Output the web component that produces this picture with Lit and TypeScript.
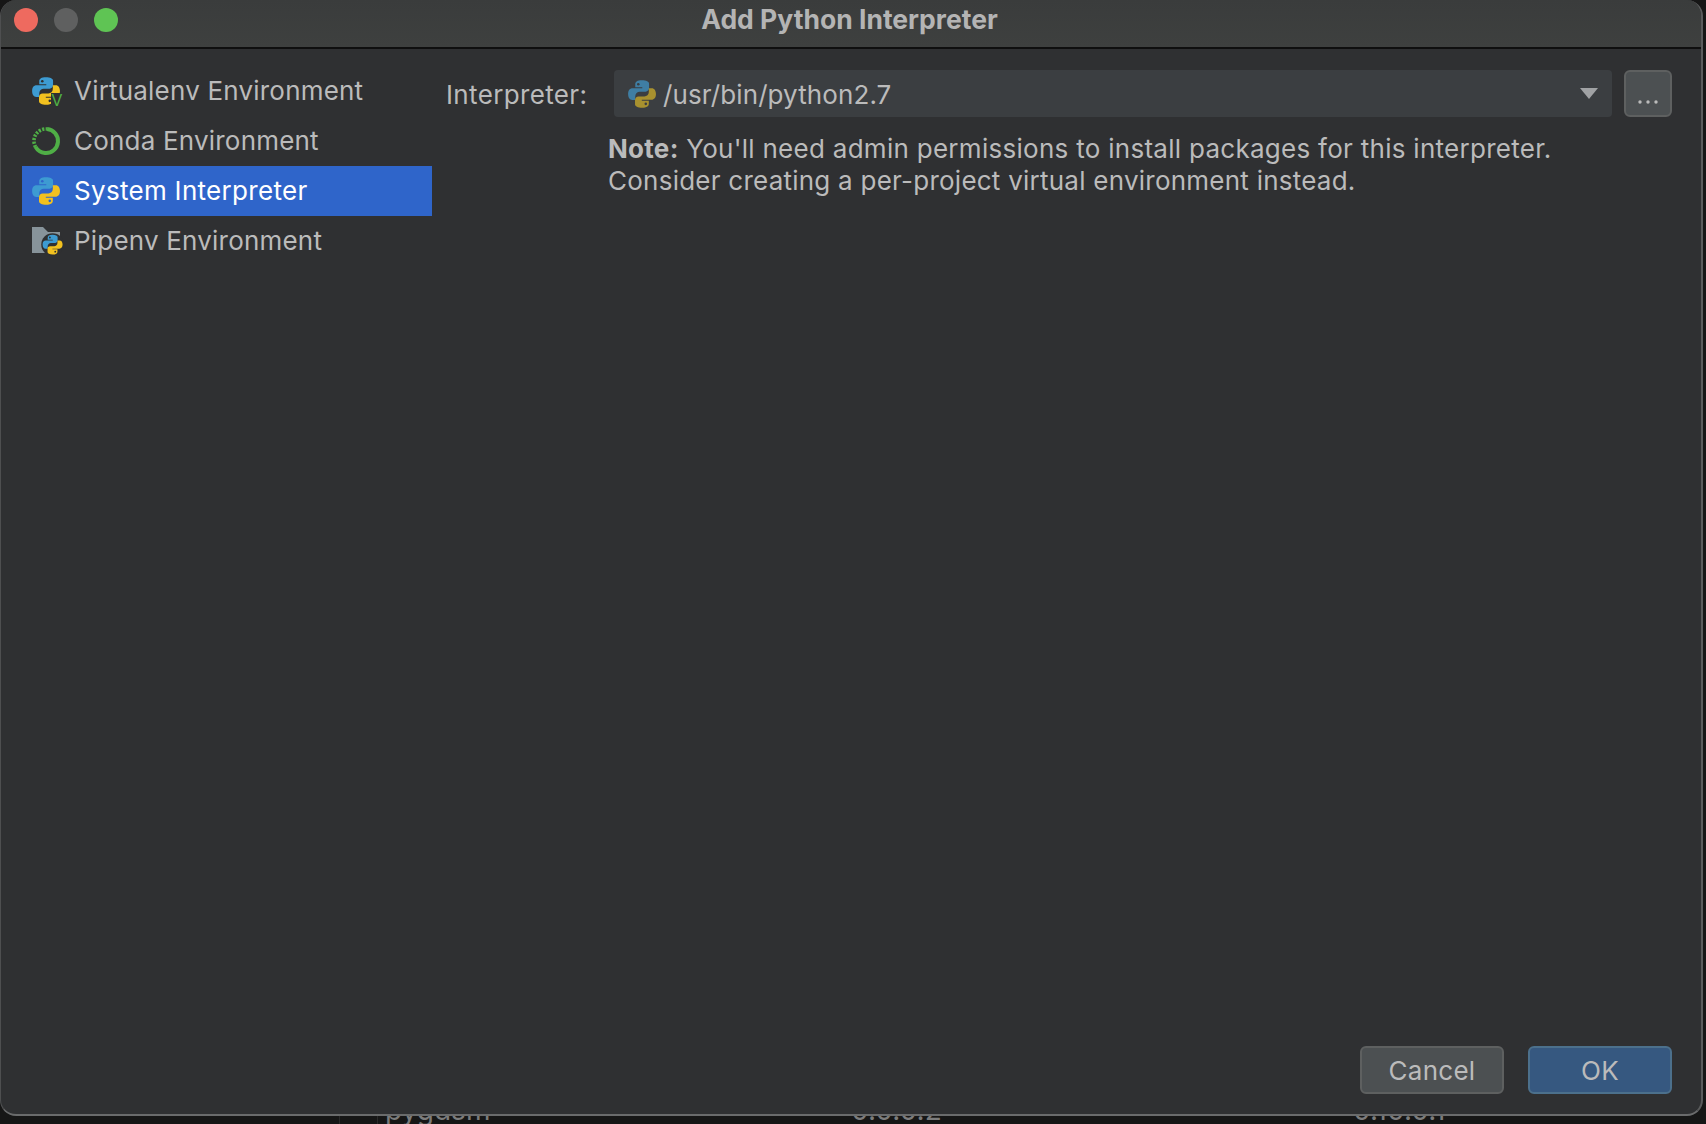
import { LitElement, css, html, svg } from 'lit'
import { customElement, property } from 'lit/decorators.js'

const SNAKE = 'M11.9.2C8 .2 6.2 1.5 6.2 3.6V6.3h6v.8H3.9C1.6 7.1.1 8.9.1 12s1.4 5 3.5 5h2.6v-3.2c0-2.2 1.8-3.8 3.8-3.8h5c1.7 0 3-1.4 3-3.1V3.2C18 1.3 15.6.2 11.9.2z'

// two halves of the logo, the second is the first turned upside down
function python(blue: string, yellow: string, eye: string) {
  return svg`
    <path d=${SNAKE} fill=${blue} />
    <circle cx="8.8" cy="3.6" r="1.1" fill=${eye} />
    <g transform="rotate(180 12 12)">
      <path d=${SNAKE} fill=${yellow} />
      <circle cx="8.8" cy="3.6" r="1.1" fill=${eye} />
    </g>
  `
}

const BLUE = '#3d9bd2'
const YELLOW = '#f2c11f'

const icons: Record<string, unknown> = {
  virtualenv: html`<svg viewBox="0 0 28 28" width="28" height="28">
    <g transform="scale(1.17)">${python(BLUE, YELLOW, '#2f3032')}</g>
    <rect x="19" y="16" width="14" height="14" fill="#2f3032" />
    <text x="19.5" y="29" font-size="16" font-family="Liberation Sans, sans-serif" fill="#4fb044">V</text>
  </svg>`,
  conda: html`<svg viewBox="0 0 28 28" width="28" height="28">
    <circle
      cx="14"
      cy="14"
      r="12"
      fill="none"
      stroke="#4fae46"
      stroke-width="4"
      stroke-dasharray="49 27"
      transform="rotate(-85 14 14)"
    />
    <path d="M3.6 20A12 12 0 0 1 15 2" fill="none" stroke="#4fae46" stroke-width="3.6" stroke-dasharray="2.2 1.3" />
  </svg>`,
  system: html`<svg viewBox="0 0 28 28" width="28" height="28">
    <g transform="scale(1.17)">${python(BLUE, YELLOW, '#2f65ca')}</g>
  </svg>`,
  pipenv: html`<svg viewBox="0 0 32 28" width="32" height="28">
    <path d="M0 0h11l5 5h12v21H0z" fill="#87939a" />
    <g transform="translate(10.5 7.5) scale(.84)">
      <circle cx="12" cy="12" r="13.5" fill="#2f3032" />
      ${python(BLUE, YELLOW, '#2f3032')}
    </g>
  </svg>`,
  combo: html`<svg viewBox="0 0 28 28" width="28" height="28">
    <g transform="scale(1.17)">${python('#3f7ea3', '#a8912f', '#3b3e41')}</g>
  </svg>`,
}

@customElement('side-item')
export class SideItem extends LitElement {
  @property({ type: String }) icon = ''
  @property({ type: String }) label = ''
  @property({ type: Boolean, reflect: true }) selected = false

  render() {
    return html`<div class="icon">${icons[this.icon]}</div>
      <span>${this.label}</span>`
  }

  static styles = css`
    :host {
      display: flex;
      align-items: center;
      height: 50px;
      padding-left: 10px;
      color: #bbbbbb;
      letter-spacing: 0.2px;
    }
    :host([selected]) {
      background: #2f65ca;
      color: #ffffff;
      letter-spacing: 0.3px;
    }
    .icon {
      display: flex;
      width: 42px;
      flex: none;
    }
    span {
      margin-top: -2px;
    }
    svg {
      display: block;
      overflow: visible;
    }
  `
}

@customElement('app-root')
export class AppRoot extends LitElement {
  render() {
    return html`
      <div class="window">
        <header class="titlebar">
          <div class="lights">
            <i class="red"></i>
            <i class="gray"></i>
            <i class="green"></i>
          </div>
          <div class="title">Add Python Interpreter</div>
        </header>
        <div class="body">
          <nav class="side">
            <side-item icon="virtualenv" label="Virtualenv Environment"></side-item>
            <side-item icon="conda" label="Conda Environment"></side-item>
            <side-item icon="system" label="System Interpreter" selected></side-item>
            <side-item icon="pipenv" label="Pipenv Environment"></side-item>
          </nav>
          <main class="form">
            <div class="row">
              <label>Interpreter:</label>
              <div class="combo">
                <div class="combo-icon">${icons.combo}</div>
                <span class="path">/usr/bin/python2.7</span>
                <svg class="arrow" viewBox="0 0 18 11" width="18" height="11">
                  <path d="M0 0h18l-9 11z" fill="#a0a2a4" />
                </svg>
              </div>
              <button class="browse">
                <svg viewBox="0 0 20 4" width="20" height="4">
                  <circle cx="2" cy="2" r="1.7" fill="#bbb" />
                  <circle cx="10" cy="2" r="1.7" fill="#bbb" />
                  <circle cx="18" cy="2" r="1.7" fill="#bbb" />
                </svg>
              </button>
            </div>
            <p class="note">
              <span class="line"><b>Note:</b> You'll need admin permissions to install packages for this interpreter.</span>
              <span class="line second">Consider creating a per-project virtual environment instead.</span>
            </p>
          </main>
        </div>
        <footer class="actions">
          <button class="btn">Cancel</button>
          <button class="btn ok">OK</button>
        </footer>
      </div>
      <div class="behind">
        <div class="cell first"></div>
        <div class="cell gutter"></div>
        <div class="cell name"><span>pygdsm</span></div>
        <div class="cell version"><span>0.0.0.2</span></div>
        <div class="cell"><span>0.10.0.1</span></div>
      </div>
    `
  }

  static styles = css`
    :host {
      display: block;
      width: 1706px;
      height: 1124px;
      background: #161616;
      font-family: 'Inter', 'Liberation Sans', sans-serif;
      font-size: 26px;
      color: #bbbbbb;
      overflow: hidden;
    }
    .window {
      box-sizing: border-box;
      width: 1703px;
      height: 1116px;
      display: flex;
      flex-direction: column;
      background: #2f3032;
      border-radius: 16px;
      border-left: 1px solid #4e4f50;
      border-right: 2px solid #5a5b5c;
      border-bottom: 2px solid #6a6b6c;
      overflow: hidden;
    }
    .titlebar {
      flex: none;
      box-sizing: border-box;
      height: 49px;
      display: flex;
      align-items: center;
      background: linear-gradient(#3a3c3c, #3e403f);
      border-bottom: 2px solid #0f0f0f;
      padding-left: 13px;
    }
    .lights {
      display: flex;
      gap: 16px;
      width: 0;
      margin-top: -8px;
    }
    .lights i {
      flex: none;
      width: 24px;
      height: 24px;
      border-radius: 50%;
    }
    .red {
      background: #ee6a5f;
    }
    .gray {
      background: #5f6060;
    }
    .green {
      background: #5fc454;
    }
    .title {
      flex: 1;
      text-align: center;
      font-size: 26.5px;
      font-weight: 700;
      color: #b4b4b4;
      padding: 0 16px 10px 0;
    }
    .body {
      flex: 1;
      min-height: 0;
      display: flex;
      padding: 17px 29px 0 21px;
    }
    .side {
      flex: none;
      width: 410px;
    }
    .form {
      flex: 1;
      min-width: 0;
      padding: 4px 0 0 14px;
    }
    .row {
      display: flex;
      align-items: center;
      height: 47px;
    }
    label {
      flex: none;
      width: 168px;
      padding-top: 2px;
      letter-spacing: 0.35px;
    }
    .combo {
      flex: 1;
      height: 47px;
      display: flex;
      align-items: center;
      box-sizing: border-box;
      padding: 0 14px 0 14px;
      background: #3b3e41;
      border-radius: 4px;
    }
    .combo-icon {
      flex: none;
      width: 35px;
    }
    .combo-icon svg {
      display: block;
    }
    .path {
      flex: 1;
      padding-top: 1px;
      letter-spacing: 0.1px;
    }
    .arrow {
      flex: none;
    }
    .browse {
      flex: none;
      width: 48px;
      height: 47px;
      margin-left: 12px;
      padding: 12px 0 0;
      background: #4c5052;
      border: 2px solid #5e6060;
      border-radius: 6px;
    }
    .note {
      margin: 16px 0 0 162px;
      line-height: 32px;
      letter-spacing: 0.28px;
    }
    .line {
      display: block;
    }
    .second {
      letter-spacing: 0.24px;
    }
    b {
      font-weight: 700;
    }
    .actions {
      flex: none;
      display: flex;
      justify-content: flex-end;
      gap: 24px;
      padding: 0 29px 20px 0;
    }
    .btn {
      box-sizing: border-box;
      width: 144px;
      height: 48px;
      padding: 0;
      font: inherit;
      letter-spacing: 0.25px;
      color: #bbbbbb;
      background: #4c5052;
      border: 2px solid #5e6060;
      border-radius: 6px;
    }
    .ok {
      background: #365880;
      border-color: #4c708c;
    }
    /* table of the window behind the dialog, only the bottom of its text shows */
    .behind {
      height: 8px;
      overflow: hidden;
      display: flex;
      font-size: 28px;
      line-height: 24px;
      color: #7c7c7c;
    }
    .cell {
      flex: none;
      box-sizing: border-box;
      height: 8px;
      display: flex;
      align-items: flex-end;
    }
    .cell span {
      flex: none;
      height: 24px;
      margin-bottom: 2px;
    }
    .first {
      width: 340px;
      border-right: 1px solid #2a2a2a;
    }
    .gutter {
      width: 38px;
      border-right: 1px solid #2a2a2a;
    }
    .name {
      width: 473px;
      padding-left: 7px;
    }
    .version {
      width: 502px;
    }
  `
}
